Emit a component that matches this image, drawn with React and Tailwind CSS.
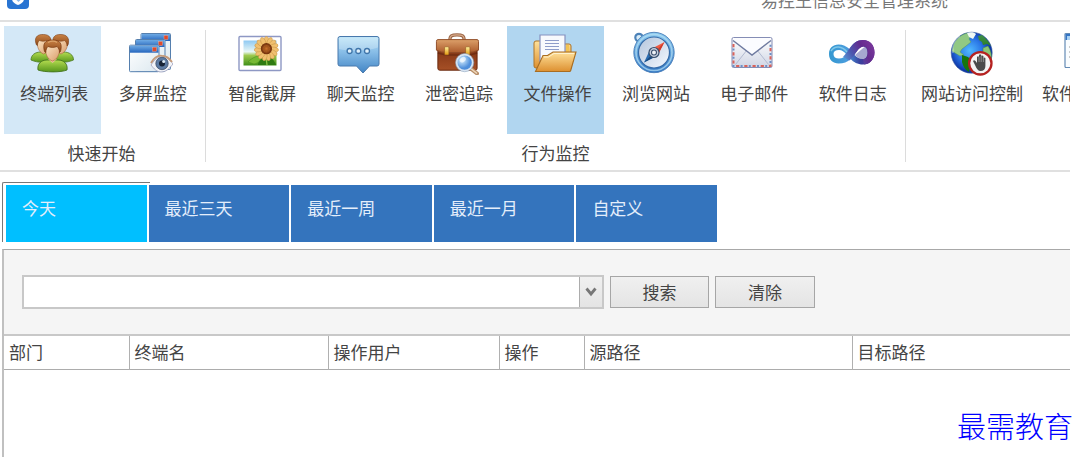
import React from "react";

function PeopleIcon() {
  return (
    <svg viewBox="0 0 44 44" className="size-11 shrink-0" aria-hidden="true">
      <defs>
        <linearGradient id="pg" x1="0" y1="0" x2="0" y2="1">
          <stop offset="0" stopColor="#b4dc50" />
          <stop offset="1" stopColor="#57961c" />
        </linearGradient>
        <linearGradient id="pf" x1="0" y1="0" x2="1" y2="1">
          <stop offset="0" stopColor="#fde8c8" />
          <stop offset="1" stopColor="#d89a68" />
        </linearGradient>
        <linearGradient id="ph" x1="0" y1="0" x2="0" y2="1">
          <stop offset="0" stopColor="#c98245" />
          <stop offset="1" stopColor="#8a4517" />
        </linearGradient>
      </defs>
      <path d="M1 29c0-5 4-8 10-8h5c5 0 8 3 8 9-8 2-16 2-23-1z" fill="url(#pg)" stroke="#4b7a22" strokeWidth=".8" />
      <path d="M43.500 29c0-5-4-8-10-8h-5c-5 0-8 3-8 9 8 2 16 2 23-1z" fill="url(#pg)" stroke="#4b7a22" strokeWidth=".8" />
      <g>
        <path d="M7 8c0 9 2 13 6.500 15C18 21 20.500 17 20.500 8z" fill="url(#pf)" stroke="#a7683c" strokeWidth=".6" />
        <path d="M6.500 14C3.500 7 7 3 13.500 3.500c6 0 9 4 7 10.500l-1 1c0-3-1-4-2.500-5.500-3 1-5 1-7.500 0-1.500 1.500-2 2.500-2 5z" fill="url(#ph)" stroke="#7d3f18" strokeWidth=".6" />
      </g>
      <g transform="translate(17.500 0)">
        <path d="M7 8c0 9 2 13 6.500 15C18 21 20.500 17 20.500 8z" fill="url(#pf)" stroke="#a7683c" strokeWidth=".6" />
        <path d="M6.500 14C3.500 7 7 3 13.500 3.500c6 0 9 4 7 10.500l-1 1c0-3-1-4-2.500-5.500-3 1-5 1-7.500 0-1.500 1.500-2 2.500-2 5z" fill="url(#ph)" stroke="#7d3f18" strokeWidth=".6" />
      </g>
      <path d="M8 39c-1-6 3-10 9-10h11c6 0 10 4 9 10-6 2.500-22 2.500-29 0z" fill="url(#pg)" stroke="#43731c" strokeWidth=".9" />
      <path d="M18 28h9l-4.500 4z" fill="#edc198" />
      <path d="M15 14c0 10 3 14.500 7.500 16 4.500-1.500 7.500-6 7.500-16z" fill="url(#pf)" stroke="#a7683c" strokeWidth=".6" />
      <path d="M14.500 20.500c-2-7.500 0-11.500 8-11.500s10 4 8 11.500l-1 1c0-3-1-4.500-2.500-6-3 1.200-6 1.200-9 0-1.500 1.500-2 3-2.200 6z" fill="url(#ph)" stroke="#77370f" strokeWidth=".7" />
      <path d="M18 11.500c3-1.500 7-1.500 9 0" stroke="#e5b37c" strokeWidth="1.200" fill="none" opacity=".7" />
    </svg>
  );
}

function MiniWindow({ x, y, w, h }) {
  return (
    <g transform={`translate(${x} ${y})`}>
      <rect x=".5" y=".5" width={w} height={h} rx="1" fill="url(#wb)" stroke="#557fae" />
      <rect x="1" y="1" width={w - 1} height="7" fill="url(#wt)" />
      <rect x={w - 6} y="2.500" width="4" height="4" fill="#e0492a" stroke="#f3b09b" strokeWidth=".4" />
    </g>
  );
}

function WindowsEyeIcon() {
  return (
    <svg viewBox="0 0 44 44" className="size-11 shrink-0" aria-hidden="true">
      <defs>
        <linearGradient id="wt" x1="0" y1="0" x2="0" y2="1">
          <stop offset="0" stopColor="#6eaae4" />
          <stop offset="1" stopColor="#2565bd" />
        </linearGradient>
        <linearGradient id="wb" x1="0" y1="0" x2="1" y2="1">
          <stop offset="0" stopColor="#ffffff" />
          <stop offset="1" stopColor="#dce8ef" />
        </linearGradient>
      </defs>
      <MiniWindow x={11.5} y={2} w={29.5} h={36} />
      <MiniWindow x={6} y={8} w={29.5} h={32} />
      <MiniWindow x={0} y={13.7} w={29.5} h={26.5} />
      <path d="M22 34c4-6 7-9 12-8 4 0 7 3 10 7-4 5-7 8-12 8-4 0-7-3-10-7z" fill="#f3f4f8" stroke="#9ca0bd" strokeWidth=".8" />
      <path d="M22 32c4-7 8-8 12-7 4 0 6 2 9 6" stroke="#c59a78" strokeWidth="1.800" fill="none" />
      <circle cx="33" cy="32.500" r="6.200" fill="#5d7ba3" stroke="#33455f" strokeWidth=".7" />
      <circle cx="33" cy="32.500" r="3" fill="#182437" />
      <circle cx="34.700" cy="30.500" r="1.500" fill="#dceaf5" />
    </svg>
  );
}

function FlowerIcon() {
  const petals = [0, 24, 48, 72, 96, 120, 144, 168, 192, 216, 240, 264, 288, 312, 336];
  return (
    <svg viewBox="0 0 44 44" className="size-11 shrink-0" aria-hidden="true">
      <defs>
        <linearGradient id="fs" x1="0" y1="0" x2="0" y2="1">
          <stop offset="0" stopColor="#8ec9f3" />
          <stop offset=".45" stopColor="#e9f7f5" />
          <stop offset=".6" stopColor="#9dc94e" />
          <stop offset="1" stopColor="#3f8f18" />
        </linearGradient>
        <radialGradient id="fc">
          <stop offset="0" stopColor="#c8712b" />
          <stop offset="1" stopColor="#6d2d0a" />
        </radialGradient>
      </defs>
      <rect x="1" y="5.500" width="42" height="34" rx="1" fill="#fff" stroke="#8e98c4" strokeWidth="1.400" />
      <rect x="5.500" y="9.500" width="33" height="25" fill="url(#fs)" />
      <path d="M20 34c0-5 4-8 9-8 5 0 7 3 9 8z" fill="#2f7b12" />
      <path d="M10 31c5-5 9-6 14-7-1 5-3 8-8 9z" fill="#77b934" stroke="#448d1a" strokeWidth=".5" />
      <path d="M28 26l1 8" stroke="#8fc547" strokeWidth="1.200" />
      {petals.map((a) => (
        <ellipse key={a} cx="28.400" cy="10" rx="2.300" ry="4.500" fill="#f0c070" stroke="#c08a38" strokeWidth=".4" transform={`rotate(${a} 28.4 17.700)`} />
      ))}
      <circle cx="28.400" cy="17.700" r="5.600" fill="url(#fc)" />
      <circle cx="28.400" cy="17.700" r="3.200" fill="none" stroke="#b96a2c" strokeWidth=".8" strokeDasharray="1 1" />
    </svg>
  );
}

function ChatIcon() {
  return (
    <svg viewBox="0 0 44 44" className="size-11 shrink-0" aria-hidden="true">
      <defs>
        <linearGradient id="cb" x1="0" y1="0" x2="0" y2="1">
          <stop offset="0" stopColor="#b9e3f7" />
          <stop offset=".45" stopColor="#85bbe6" />
          <stop offset="1" stopColor="#4285c5" />
        </linearGradient>
      </defs>
      <path d="M3 5.500h37q2 0 2 2v25.500q0 2-2 2h-7.500L26 42l-6.500-7H3q-2 0-2-2V7.500q0-2 2-2z" fill="url(#cb)" stroke="#4878ac" />
      <path d="M3 6.500h37q1 0 1 1v9C30 20 13 21 2 18V7.500q0-1 1-1z" fill="#fff" opacity=".25" />
      {[12.6, 21.3, 30].map((x) => (
        <circle key={x} cx={x} cy="20" r="2.500" fill="#e1f1fb" stroke="#3e74a9" strokeWidth="1.300" />
      ))}
    </svg>
  );
}

function BriefcaseIcon() {
  return (
    <svg viewBox="0 0 46 46" className="size-11 shrink-0" aria-hidden="true">
      <defs>
        <linearGradient id="bc" x1="0" y1="0" x2="0" y2="1">
          <stop offset="0" stopColor="#7b2f12" />
          <stop offset="1" stopColor="#a65026" />
        </linearGradient>
        <linearGradient id="bf" x1="0" y1="0" x2="0" y2="1">
          <stop offset="0" stopColor="#dca06a" />
          <stop offset="1" stopColor="#ac5b2c" />
        </linearGradient>
        <radialGradient id="bl" cx=".35" cy=".35">
          <stop offset="0" stopColor="#d8f1ff" />
          <stop offset="1" stopColor="#4f8fdb" />
        </radialGradient>
        <linearGradient id="bg" x1="0" y1="0" x2="0" y2="1">
          <stop offset="0" stopColor="#fff1a0" />
          <stop offset="1" stopColor="#e39a10" />
        </linearGradient>
      </defs>
      <path d="M15.500 10c0-5 2-6 7.500-6s7.500 1 7.500 6" fill="none" stroke="#9c6748" strokeWidth="3.400" />
      <path d="M15.500 9c0-4.500 3-5 7.500-5s7.500.5 7.500 5" fill="none" stroke="#d9ac8c" strokeWidth="1.200" />
      <rect x="3" y="14" width="41" height="27" rx="2" fill="url(#bc)" stroke="#66260d" />
      <path d="M3 9h41q1.500 0 1.500 2v9q-5 2.500-12 2.500H13.500Q6 22.500 1.500 20v-9Q1.500 9 3 9z" fill="url(#bf)" stroke="#8f4c27" />
      <path d="M3 23q6 2 12 2h17q7 0 12-2" fill="none" stroke="#55200c" strokeWidth="1.500" opacity=".5" />
      <rect x="10" y="16.500" width="4.500" height="8.500" rx="1" fill="url(#bg)" stroke="#8b5319" strokeWidth=".6" />
      <rect x="32" y="16.500" width="4.500" height="8.500" rx="1" fill="url(#bg)" stroke="#8b5319" strokeWidth=".6" />
      <path d="M37.500 39.500l6.500 5" stroke="#b88e68" strokeWidth="4" strokeLinecap="round" />
      <path d="M37 39l6.500 5" stroke="#eed6b9" strokeWidth="1.500" strokeLinecap="round" />
      <circle cx="31" cy="33" r="8.500" fill="url(#bl)" stroke="#d9e5f2" strokeWidth="2" />
      <circle cx="31" cy="33" r="9.600" fill="none" stroke="#8aa2bd" strokeWidth=".6" />
      <ellipse cx="29" cy="30" rx="3.500" ry="2.500" fill="#fff" opacity=".65" transform="rotate(-35 29 30)" />
    </svg>
  );
}

function FolderIcon() {
  return (
    <svg viewBox="0 0 44 44" className="size-11 shrink-0" aria-hidden="true">
      <defs>
        <linearGradient id="ff" x1="0" y1="0" x2="0" y2="1">
          <stop offset="0" stopColor="#ffe19a" />
          <stop offset="1" stopColor="#dd9030" />
        </linearGradient>
      </defs>
      <path d="M1 12q0-2 2-2h7q2 0 2 2v3h16v-1q0-1 1-1h7q2 0 2 2v22H3q-2 0-2-2z" fill="url(#ff)" stroke="#ae7428" />
      <path d="M33 14h3v8h-3z" fill="#f2c352" />
      <path d="M7 4h25v30H7z" fill="#f7f9fd" stroke="#8691bf" strokeWidth="1.200" />
      <path d="M12 9.500h14M12 12.500h14M12 15.500h14M12 18.500h14" stroke="#8d9cc9" strokeWidth="1.100" />
      <path d="M10 24.500h4.500L20 21h23l-5.300 18.500q-.3 1-1.300 1H2.500z" fill="url(#ff)" stroke="#a96d21" strokeWidth="1.100" />
      <path d="M11 26h4.500l5.500-3.500h20" fill="none" stroke="#fff1cc" strokeWidth="1" />
    </svg>
  );
}

function CompassIcon() {
  return (
    <svg viewBox="0 0 44 44" className="size-11 shrink-0" aria-hidden="true">
      <defs>
        <linearGradient id="co" x1="0" y1="0" x2="0" y2="1">
          <stop offset="0" stopColor="#8fcdf1" />
          <stop offset="1" stopColor="#3277c4" />
        </linearGradient>
        <linearGradient id="ci" x1="0" y1="0" x2="1" y2="1">
          <stop offset="0" stopColor="#b4c5dc" />
          <stop offset="1" stopColor="#f5f9ff" />
        </linearGradient>
      </defs>
      <circle cx="7" cy="6.500" r="3.700" fill="#d9ecf8" stroke="#4c82b8" strokeWidth="2.200" />
      <circle cx="22" cy="21.500" r="20.200" fill="url(#co)" stroke="#4a7eb8" strokeWidth=".9" />
      <circle cx="22" cy="21.500" r="18" fill="none" stroke="#b7dff4" strokeWidth="1.600" opacity=".7" />
      <circle cx="22" cy="21.500" r="15.500" fill="url(#ci)" stroke="#356ba9" strokeWidth="1.200" />
      <path d="M32.500 11L18 18.500l7.500 6z" fill="#f05a42" />
      <path d="M32.500 11l-10 10.500 3 3z" fill="#cc3a2a" />
      <path d="M12 31.500l6-13 7.500 6z" fill="#2d6eb2" />
      <path d="M12 31.500l10-10 3.500 3z" fill="#174980" />
      <circle cx="22" cy="21.500" r="5" fill="#c4cddd" stroke="#39516f" strokeWidth="1.200" />
      <circle cx="22" cy="21.500" r="2.500" fill="#eff3f8" stroke="#3c506d" strokeWidth="1.100" />
    </svg>
  );
}

function MailIcon() {
  return (
    <svg viewBox="0 0 44 44" className="size-11 shrink-0" aria-hidden="true">
      <defs>
        <linearGradient id="mb" x1="0" y1="0" x2="0" y2="1">
          <stop offset="0" stopColor="#ffffff" />
          <stop offset="1" stopColor="#cfd5e4" />
        </linearGradient>
      </defs>
      <rect x="2" y="6.500" width="40" height="30" rx="1.500" fill="url(#mb)" stroke="#858db5" />
      <path d="M3.500 13v22h37V13" fill="none" stroke="#d9625a" strokeWidth="2" strokeDasharray="3.200 5" />
      <path d="M3.500 13v22h37V13" fill="none" stroke="#6e8ec4" strokeWidth="2" strokeDasharray="2 6.200" strokeDashoffset="-4.500" />
      <path d="M5.500 33.500L17 19M38.500 33.500L27 19" stroke="#b2bad0" fill="none" />
      <path d="M3 7.500h38L22 24z" fill="#fbfcff" />
      <path d="M3 9.500L22 24 41 9.500" fill="none" stroke="#6f7ba0" strokeWidth="1.400" />
    </svg>
  );
}

function InfinityIcon() {
  return (
    <svg viewBox="0 0 44 44" className="size-11 shrink-0 overflow-visible" aria-hidden="true">
      <defs>
        <linearGradient id="ia" gradientUnits="userSpaceOnUse" x1="0" y1="0" x2="44" y2="0">
          <stop offset="0" stopColor="#3498d0" />
          <stop offset=".4" stopColor="#4a9ddd" />
          <stop offset=".7" stopColor="#39429f" />
          <stop offset="1" stopColor="#5a2c90" />
        </linearGradient>
        <linearGradient id="ib" gradientUnits="userSpaceOnUse" x1="10" y1="32" x2="44" y2="12">
          <stop offset="0" stopColor="#5fb8ea" />
          <stop offset=".4" stopColor="#4b58b0" />
          <stop offset=".7" stopColor="#632b8e" />
          <stop offset="1" stopColor="#7c389c" />
        </linearGradient>
      </defs>
      <path
        fillRule="evenodd"
        d="M0 23C0 17 4 13.500 9.500 13.500c4.500 0 8 2 11 4.500C24 12 28 9 34 9c7 0 11.500 5 11.500 12.500S40 33.500 34 33.500c-5.500 0-9.500-2.500-12.500-5.500-3 3-7 4.500-12 4.500C4 32.500 0 29 0 23zm4.500 0c0 3 2 4.500 5.500 4.500s5.500-1.500 7.500-4C15 20.500 13 19 10 19c-3.500 0-5.500 1.500-5.500 4zm21 1c2.500 2.500 5 4 8.500 4 3 0 4.500-2.500 4.500-6.500s-1.500-6-4-6c-3.500 0-6.500 4-9 8.500z"
        fill="url(#ia)"
      />
      <path d="M14 26c6-6 9.500-17 20-17 7 0 11.500 5 11.500 12.500S40 33.500 35 33.500l-1-5.500c3 0 4.500-2.500 4.500-6.500s-1.500-6-4-6c-5 0-8.500 9-14 14z" fill="url(#ib)" />
      <path d="M26 24l10-8.500c2 .5 2.500 3 2.500 6 0 4-1.500 6.500-4.500 6.500-3.500 0-5.500-1.500-8-4z" fill="#3a3c96" opacity=".45" />
      <path d="M2 20c4-6 11-5 16 1" stroke="#9bdaf1" fill="none" strokeWidth="1.500" opacity=".7" />
    </svg>
  );
}

function GlobeIcon() {
  return (
    <svg viewBox="0 0 44 44" className="size-11 shrink-0 overflow-visible" aria-hidden="true">
      <defs>
        <radialGradient id="gb" cx=".45" cy=".45">
          <stop offset="0" stopColor="#51baff" />
          <stop offset=".6" stopColor="#2a76e6" />
          <stop offset="1" stopColor="#0d36a8" />
        </radialGradient>
        <linearGradient id="gl" x1="0" y1="0" x2="0" y2="1">
          <stop offset="0" stopColor="#3f8f4a" />
          <stop offset="1" stopColor="#2b7f25" />
        </linearGradient>
      </defs>
      <circle cx="21.700" cy="21.700" r="20.500" fill="url(#gb)" stroke="#3a5c9c" strokeWidth=".6" />
      <path d="M4 13C7 7 12 3 18 2l3 2-2 4 2 3-5 4-4 3-2 3 4 3-4 1-5-3-3-2z" fill="#91c983" stroke="#53955b" strokeWidth=".5" />
      <path d="M17 2c3-1 7-1 9 1l-3 5-4-2z" fill="#eff8f3" />
      <path d="M12 24l6 2 4 4-2 4-1 7c-4-2-6-6-7-10z" fill="#16750e" />
      <path d="M28 5l4-1c4 3 7 7 9 11l-4-2-4 1-1-3-3-2z" fill="url(#gl)" />
      <path d="M33 17l5-2c3 5 4 9 3 14l-5-2-3-5z" fill="#8ac477" stroke="#458c3b" strokeWidth=".5" />
      <path d="M10 5C4 9 2 16 3 22" fill="none" stroke="#fff" strokeWidth="2" opacity=".3" />
      <circle cx="30.300" cy="32.300" r="11.200" fill="#f4f4f4" stroke="#b52221" strokeWidth="2.300" />
      <path d="M25 34l-2-4q1-1.500 2.500 0l1.500 2v-6q1-1.500 2 0v-2q1.100-1.500 2.200 0v1q1.100-1.200 2.200 0v2q1.200-1 2 0v8q0 5-5 5-3 0-5.400-6z" fill="#4b4b4b" />
      <path d="M29 26v5M31.200 25v6M33.400 27v4" stroke="#b8b8b8" strokeWidth=".6" />
    </svg>
  );
}

function DocumentWindowIcon() {
  return (
    <svg viewBox="0 0 44 44" className="size-11 shrink-0" aria-hidden="true">
      <rect x="1" y="2.500" width="32" height="34" rx="1" fill="#fafdff" stroke="#648bb5" strokeWidth="1.200" />
      <path d="M1.500 3h31v6h-31z" fill="#3475c4" />
      <path d="M3 5h4v4H3z" fill="#a9d1f3" />
      <path d="M5 16h20M5 21h20M5 26h20" stroke="#9a9a9a" strokeDasharray="2 1" />
    </svg>
  );
}

const behaviour = [
  { label: "智能截屏", Icon: FlowerIcon },
  { label: "聊天监控", Icon: ChatIcon },
  { label: "泄密追踪", Icon: BriefcaseIcon },
  { label: "文件操作", Icon: FolderIcon, tone: "bg-[#b1d6f0]" },
  { label: "浏览网站", Icon: CompassIcon },
  { label: "电子邮件", Icon: MailIcon },
  { label: "软件日志", Icon: InfinityIcon },
];

function Tool({ label, Icon, tone = "" }) {
  return (
    <button type="button" className={`flex h-[108px] flex-1 flex-col items-center gap-1.5 pt-[5px] ${tone}`}>
      <Icon />
      <span className="pl-1 leading-6 whitespace-nowrap">{label}</span>
    </button>
  );
}

function Group({ title, width, children }) {
  return (
    <section className={`flex shrink-0 flex-col items-center ${width}`}>
      <div className="flex w-full gap-0.5">{children}</div>
      <h2 className="mt-[7px] leading-6">{title}</h2>
    </section>
  );
}

function Divider() {
  return <div className="mt-1 h-[132px] w-px shrink-0 bg-[#dcdcdc]" />;
}

const ranges = ["今天", "最近三天", "最近一周", "最近一月", "自定义"];

const columns = [
  { name: "部门", width: "w-[125px]" },
  { name: "终端名", width: "w-[199px]" },
  { name: "操作用户", width: "w-[171px]" },
  { name: "操作", width: "w-[85px]" },
  { name: "源路径", width: "w-[268px]" },
  { name: "目标路径", width: "" },
];

export default function App() {
  return (
    <div className="relative flex min-h-screen flex-col overflow-hidden bg-white pr-2.5 font-['Noto_Sans_CJK_SC',sans-serif] text-[17px] text-[#444]">
      <header className="flex h-[22px] items-end overflow-hidden border-b-2 border-[#e0e0e0] pl-[7px]">
        <svg viewBox="0 0 22 22" className="mb-[11px] size-[22px] shrink-0" aria-hidden="true">
          <rect width="22" height="22" rx="4" fill="#2874d2" />
          <path d="M5 8h12v4c0 3-3 5-6 6-3-1-6-3-6-6z" fill="#fff" />
          <path d="M9 11.500l2.500 2.500 4-4" fill="none" stroke="#8db8ea" strokeWidth="1.500" />
        </svg>
        <h1 className="mb-3 ml-[732px] leading-none whitespace-nowrap text-[#777]">易控王信息安全管理系统</h1>
      </header>

      <nav className="flex h-[150px] overflow-hidden border-b-2 border-[#e0e0e0] pt-1 pl-1">
        <Group title="快速开始" width="w-[195px]">
          <Tool label="终端列表" Icon={PeopleIcon} tone="bg-[#d4e8f7]" />
          <Tool label="多屏监控" Icon={WindowsEyeIcon} />
        </Group>
        <div className="w-1.5 shrink-0" />
        <Divider />
        <div className="w-1.5 shrink-0" />
        <Group title="行为监控" width="w-[687px]">
          {behaviour.map((item) => (
            <Tool key={item.label} {...item} />
          ))}
        </Group>
        <div className="w-1.5 shrink-0" />
        <Divider />
        <div className="flex pl-2">
          <button type="button" className="flex h-[108px] w-[116px] shrink-0 flex-col items-center gap-1.5 pt-[5px]">
            <GlobeIcon />
            <span className="leading-6 whitespace-nowrap">网站访问控制</span>
          </button>
          <button type="button" className="flex h-[108px] w-[112px] shrink-0 flex-col gap-1.5 pt-[5px] pl-3">
            <span className="pl-[22px]"><DocumentWindowIcon /></span>
            <span className="text-left leading-6">软件</span>
          </button>
        </div>
      </nav>

      <div className="flex pt-2.5 pl-0.5">
        <div role="tablist" className="relative flex w-[715px] gap-0.5 pt-[3px] pl-1">
          <div className="pointer-events-none absolute top-0 left-0 h-[60px] w-[148px] rounded-tl-xs border-t border-l border-[#777]" />
          {ranges.map((range, i) => (
            <button
              key={range}
              type="button"
              role="tab"
              aria-selected={i === 0}
              className={`flex h-[57px] flex-1 items-start px-4 pt-[11px] leading-6 text-[#e4eefb] ${i === 0 ? "bg-[#00bfff]" : "bg-[#3474bd]"}`}
            >
              {range}
            </button>
          ))}
        </div>
      </div>

      <main className="mt-[7px] ml-0.5 flex flex-1 flex-col border-t border-l-2 border-t-[#a8a8a8] border-l-[#c0c0c0]">
        <form className="flex h-[84px] items-center gap-1.5 bg-[#f5f5f5] pl-[18px]" onSubmit={(e) => e.preventDefault()}>
          <div className="flex h-[34px] w-[582px] border-2 border-[#c8c8c8] bg-white">
            <input type="text" aria-label="搜索" className="min-w-0 flex-1 bg-white px-2 outline-none" />
            <button type="button" aria-label="展开" className="flex w-[23px] items-center justify-center border-l border-[#acacac] bg-linear-to-b from-[#f0f0f0] to-[#e4e4e4]">
              <svg viewBox="0 0 12 10" className="h-2.5 w-3" aria-hidden="true">
                <path d="M1.500 1.500L6 7l4.500-5.500" fill="none" stroke="#777" strokeWidth="2.800" />
              </svg>
            </button>
          </div>
          <button type="submit" className="h-8 w-[99px] border border-[#a6a6a6] bg-linear-to-b from-[#f0f0f0] to-[#e4e4e4] leading-6">搜索</button>
          <button type="reset" className="h-8 w-[100px] border border-[#a6a6a6] bg-linear-to-b from-[#f0f0f0] to-[#e4e4e4] leading-6">清除</button>
        </form>
        <table className="w-full table-fixed border-collapse border-t-2 border-[#c8c8c8]">
          <thead>
            <tr className="h-[34px] border-b border-[#acacac]">
              {columns.map((c) => (
                <th key={c.name} scope="col" className={`border-r border-[#b0b0b0] px-[5px] text-left leading-6 font-normal last:border-r-0 ${c.width}`}>
                  {c.name}
                </th>
              ))}
            </tr>
          </thead>
        </table>
      </main>

      <p className="absolute right-[7px] bottom-3 text-[29px] leading-10 font-light whitespace-nowrap text-[#0000ff]">最需教育</p>
    </div>
  );
}
